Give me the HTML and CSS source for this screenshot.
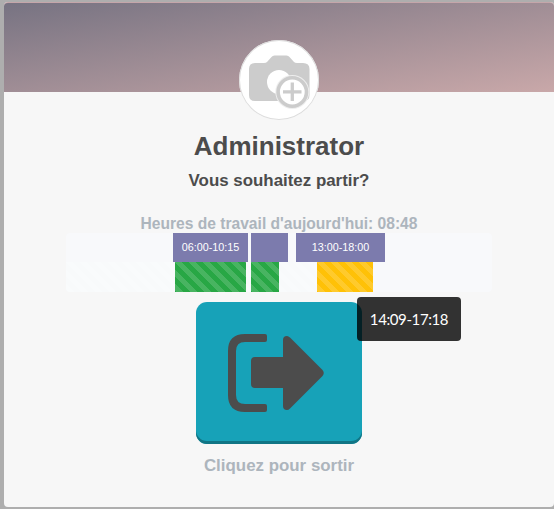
FILE: index.html
```html
<!DOCTYPE html>
<html lang="fr">
<head>
<meta charset="utf-8">
<title>Administrator</title>
<link rel="stylesheet" href="styles.css">
</head>
<body>
<main class="card">
  <header class="banner"></header>
  <div class="avatar">
    <svg viewBox="0 0 80 80" width="80" height="80">
      <path fill="#ccc" d="M16 23h9q2 0 3-1l4.500-5q1-1.500 3-1.500h12q2 0 3 1.500l4.500 5q1 1 3 1h6q6.500 0 6.500 6v26q0 6-6 6H16q-6 0-6-6V29q0-6 6-6z"/>
      <circle cx="40" cy="42" r="12" fill="#fff"/>
      <circle cx="53.300" cy="52" r="17" fill="#eee"/>
      <circle cx="53.300" cy="52" r="14.200" fill="#fff" stroke="#ccc" stroke-width="3.600"/>
      <path d="M44 51.800h18.500M53.300 42.500v18.500" stroke="#ccc" stroke-width="3.300"/>
    </svg>
  </div>
  <h1 class="name">Administrator</h1>
  <h2 class="question">Vous souhaitez partir?</h2>
  <h3 class="hours">Heures de travail d'aujourd'hui: 08:48</h3>
  <div class="timeline">
    <div class="track planned">
      <span class="bar work" style="margin-left:107px;width:75px">06:00-10:15</span>
      <span class="bar work" style="margin-left:3px;width:37px"></span>
      <span class="bar work" style="margin-left:8px;width:89px">13:00-18:00</span>
    </div>
    <div class="track actual">
      <span class="bar idle striped" style="width:109px"></span>
      <span class="bar done striped" style="width:71px"></span>
      <span class="bar idle striped" style="width:5px"></span>
      <span class="bar done striped" style="width:28px"></span>
      <span class="bar idle striped" style="width:38px"></span>
      <span class="bar late striped" style="width:56px"></span>
    </div>
  </div>
  <button class="leave" type="button">
    <svg viewBox="0 0 166 138" width="166" height="138">
      <path fill="none" stroke="#4c4c4c" stroke-width="8" d="M67 36H49q-13 0-13 13v44q0 13 13 13h18"/>
      <path fill="#4c4c4c" d="M66 32h3q2 0 2 2v4q0 2-2 2h-3zM66 102h3q2 0 2 2v4q0 2-2 2h-3z"/>
      <path fill="#4c4c4c" d="M59 55h28V38q0-4 4-4 1.500 0 3 1.500L126.500 68q2.500 3 0 6L94 106.500q-1.500 1.500-3 1.500-4 0-4-4V86H59q-4 0-4-4V59q0-4 4-4z"/>
    </svg>
    <span class="tooltip">14:09-17:18</span>
  </button>
  <p class="caption">Cliquez pour sortir</p>
</main>
</body>
</html>
```
FILE: styles.css
```css
* { box-sizing: border-box; }
body {
  margin: 0;
  height: 509px;
  padding: 2px 0 2px 4px;
  background: #aeaeae;
  overflow: hidden;
  font-family: "Liberation Sans", Arial, sans-serif;
}
.card {
  height: 505px;
  display: flex;
  flex-direction: column;
  align-items: center;
  background: #f7f7f7;
  border-radius: 4px;
}
.banner {
  width: 100%;
  height: 90px;
  flex: none;
  border-top: 1px solid #c5a6aa;
  border-radius: 4px 4px 0 0;
  background: linear-gradient(167deg, #777382 0%, #c9a8a9 100%);
  background: linear-gradient(to bottom right, #777382 0%, #c9a8a9 100%);
}
.avatar {
  width: 80px;
  height: 80px;
  margin-top: -52px;
  border-radius: 50%;
  background: #fff;
  box-shadow: inset 0 0 0 1px #ddd;
}
.avatar svg { display: block; }
h1, h2, h3, p { margin: 0; white-space: nowrap; font-weight: bold; }
.name {
  margin-top: 10px;
  font-size: 26px;
  line-height: 32px;
  color: #4c4c4c;
}
.question {
  margin-top: 9px;
  font-size: 16.9px;
  line-height: 20px;
  color: #4c4c4c;
}
.hours {
  margin-top: 23px;
  font-size: 15.6px;
  line-height: 20px;
  color: #adb5bd;
}
.timeline {
  width: 426px;
  margin: -1px 0 10px;
  border-radius: 4px;
  background: #f8f9fb;
  overflow: hidden;
}
.track { display: flex; }
.planned { height: 29px; }
.actual { height: 30px; }
.bar {
  flex: none;
  display: flex;
  align-items: center;
  justify-content: center;
  font-size: 10.8px;
  color: #fff;
}
.work { background: #7c7bad; padding-bottom: 1px; }
.done { background-color: #28a745; }
.late { background-color: #ffc107; }
.idle { background-color: #f8fafb; }
.striped {
  background-image: linear-gradient(45deg, rgba(255,255,255,.15) 25%, transparent 25%, transparent 50%, rgba(255,255,255,.15) 50%, rgba(255,255,255,.15) 75%, transparent 75%, transparent);
  background-size: 14px 14px;
}
.leave {
  position: relative;
  width: 166px;
  height: 142px;
  padding: 0;
  border: 0;
  border-radius: 11px;
  background: #17a2b8;
  box-shadow: inset 0 -3px 0 #117585;
}
.leave svg { display: block; margin-bottom: 4px; }
.tooltip {
  position: absolute;
  left: 161px;
  top: -5px;
  width: 104px;
  height: 44px;
  border-radius: 4px;
  background: rgba(0,0,0,.8);
  color: #fff;
  font: 15px/44px Lato, sans-serif;
  letter-spacing: -.4px;
  text-align: center;
}
.caption {
  margin-top: 12px;
  font-size: 16.9px;
  line-height: 20px;
  color: #adb5bd;
}
```
